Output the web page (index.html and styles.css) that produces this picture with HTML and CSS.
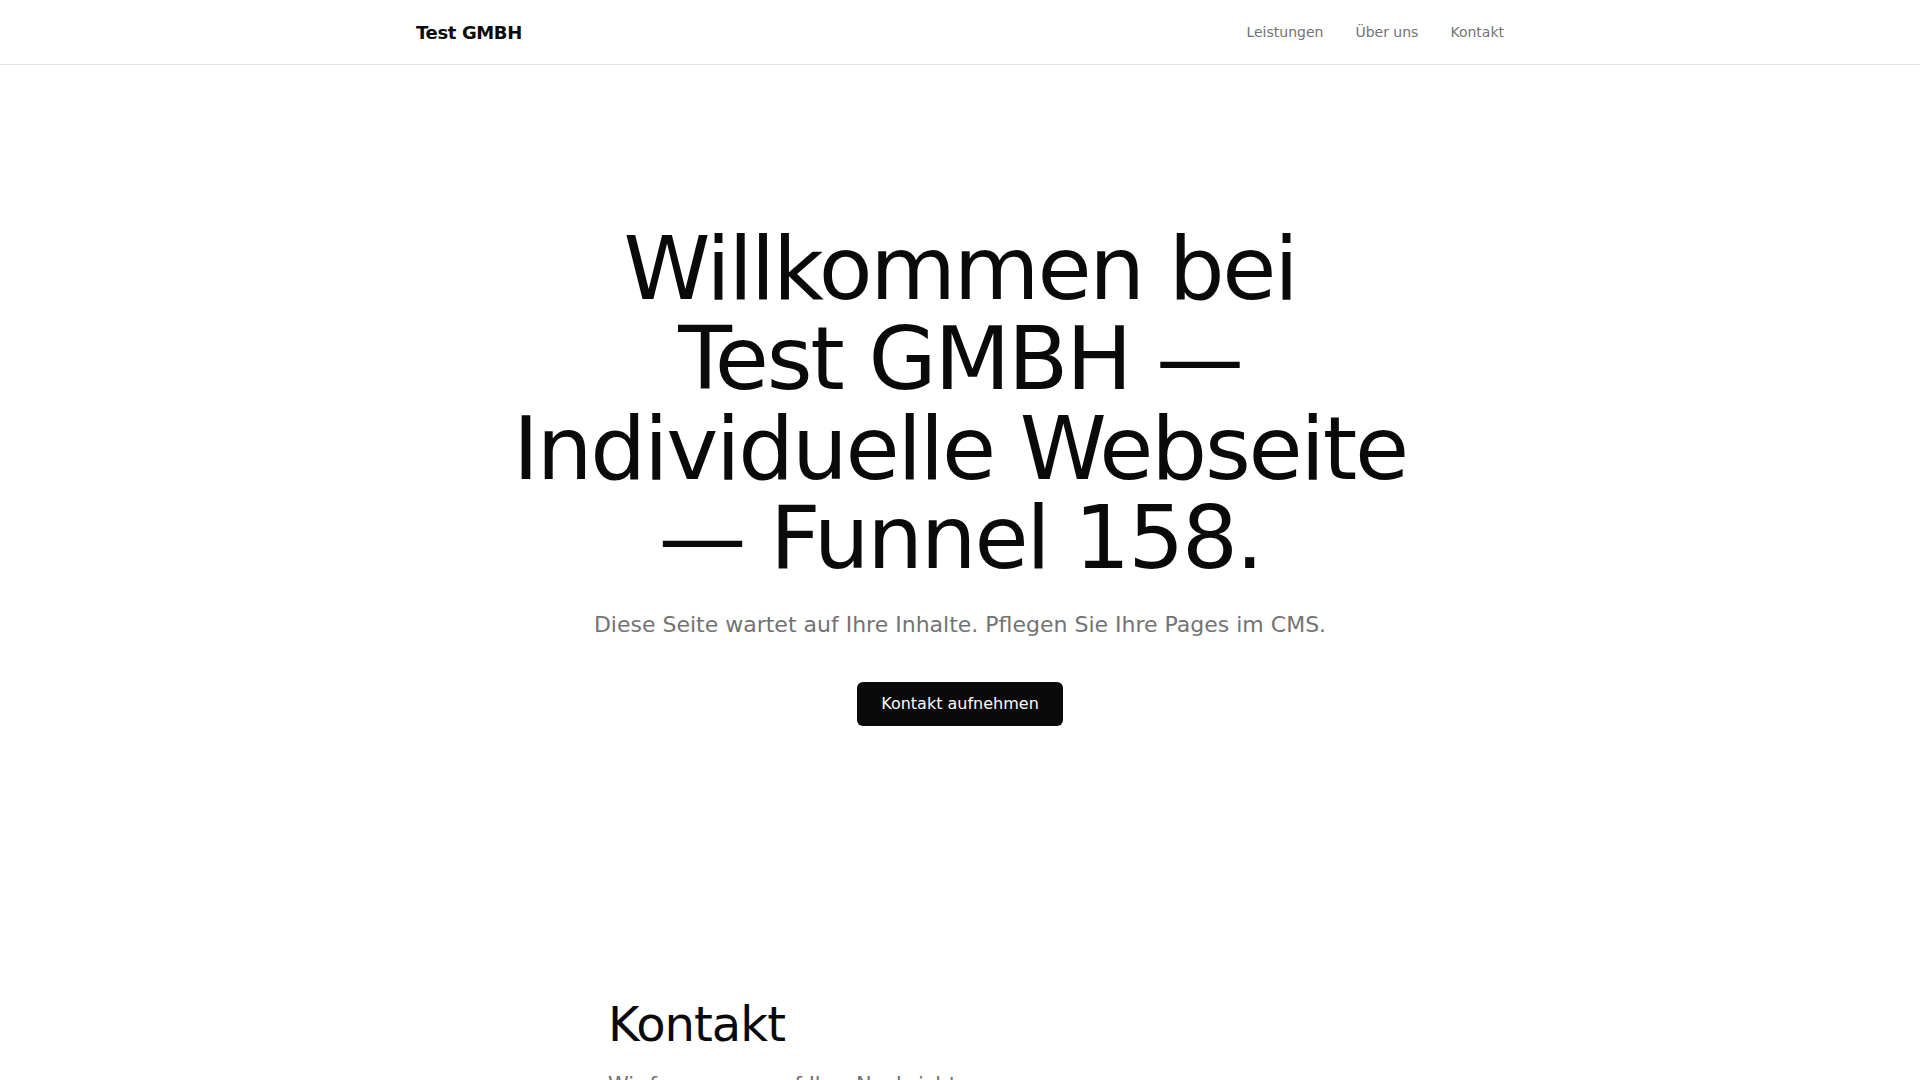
FILE: index.html
```html
<!DOCTYPE html>
<html lang="de">
<head>
  <meta charset="UTF-8">
  <meta name="viewport" content="width=device-width, initial-scale=1.0">
  <title>Test GMBH</title>
  <link rel="stylesheet" href="styles.css">
</head>
<body>
  <header class="site-header">
    <div class="header-inner">
      <a class="logo" href="#">Test GMBH</a>
      <nav class="main-nav">
        <a href="#leistungen">Leistungen</a>
        <a href="#ueber-uns">Über uns</a>
        <a href="#kontakt">Kontakt</a>
      </nav>
    </div>
  </header>

  <section class="hero">
    <h1 class="hero-title">Willkommen bei Test&nbsp;GMBH — Individuelle Webseite — Funnel 158.</h1>
    <p class="hero-text">Diese Seite wartet auf Ihre Inhalte. Pflegen Sie Ihre Pages im CMS.</p>
    <a class="btn" href="#kontakt">Kontakt aufnehmen</a>
  </section>

  <section class="contact" id="kontakt">
    <h2 class="section-title">Kontakt</h2>
    <p class="section-text">Wir freuen uns auf Ihre Nachricht.</p>
  </section>
</body>
</html>
```

FILE: styles.css
```css
body {
  margin: 0;
  font-family: "DejaVu Sans", sans-serif;
  color: #0a0a0a;
  background-color: #fff;
}

a {
  color: inherit;
  text-decoration: none;
}

.site-header {
  border-bottom: 1px solid #e5e5e5;
}

.header-inner {
  max-width: 1088px;
  height: 64px;
  margin: 0 auto;
  padding: 0 16px;
  display: flex;
  align-items: center;
  justify-content: space-between;
}

.logo {
  font-size: 18px;
  font-weight: bold;
  letter-spacing: -0.02em;
}

.main-nav {
  display: flex;
  gap: 32px;
}

.main-nav a {
  font-size: 14px;
  color: #737373;
}

.hero {
  padding: 159px 16px 160px;
  display: flex;
  flex-direction: column;
  align-items: center;
  text-align: center;
}

.hero-title {
  max-width: 960px;
  margin: 0;
  font-size: 88px;
  font-weight: normal;
  line-height: 1.02;
  letter-spacing: -0.025em;
}

.hero-text {
  margin: 25px 0 0;
  font-size: 22px;
  line-height: 1.5;
  color: #737373;
}

.btn {
  margin-top: 41px;
  padding: 10px 24px;
  font-size: 16px;
  line-height: 24px;
  color: #fafafa;
  background-color: #0a0a0a;
  border-radius: 6px;
}

.contact {
  max-width: 704px;
  margin: 0 auto;
  padding: 110px 0 80px;
}

.section-title {
  margin: 0;
  font-size: 48px;
  font-weight: normal;
  line-height: 1.2;
  letter-spacing: -0.02em;
}

.section-text {
  margin: 16px 0 0;
  font-size: 21px;
  line-height: 1.5;
  color: #737373;
}
```
